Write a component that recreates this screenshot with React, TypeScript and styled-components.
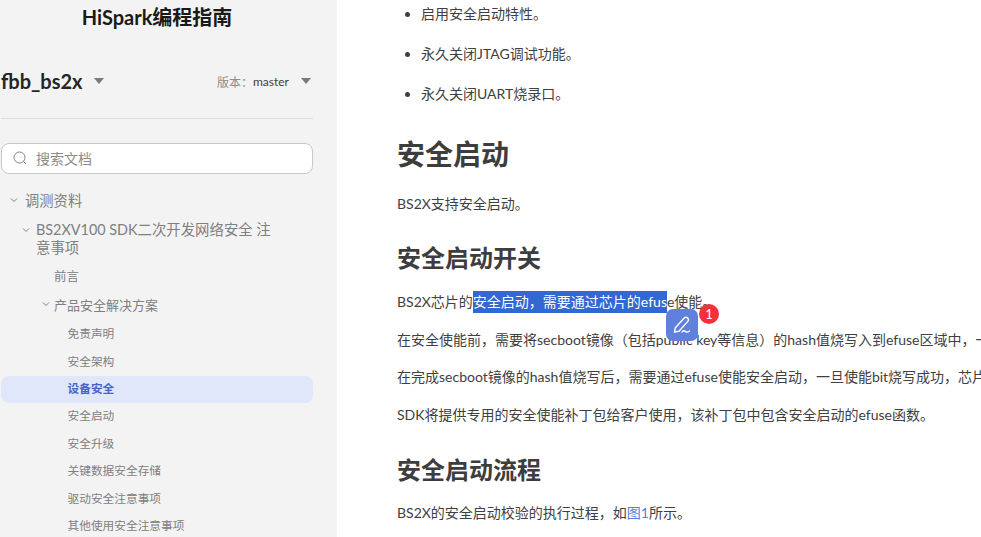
import styled, { createGlobalStyle } from "styled-components";

const Global = createGlobalStyle`
    html, body {
        margin: 0;
        padding: 0;
        width: 981px;
        height: 537px;
        overflow: hidden;
        background: #ffffff;
        font-family: Lato, "Noto Sans CJK SC", sans-serif;
    }
`

const Page = styled.div`
    display: flex;
    width: 981px;
    height: 537px;
    overflow: hidden;
`

const Sidebar = styled.aside`
    width: 337px;
    height: 537px;
    flex-shrink: 0;
    background: #f3f3f3;
    padding-left: 1px;
    box-sizing: border-box;
    overflow: hidden;
`

const SideInner = styled.div`
    width: 312px;
`

const Title = styled.div`
    height: 35px;
    line-height: 35px;
    text-align: center;
    font-size: 20px;
    font-weight: 700;
    color: #1a1a1a;
`

const VersionRow = styled.div`
    display: flex;
    align-items: center;
    justify-content: space-between;
    height: 84px;
    padding-top: 8px;
    box-sizing: border-box;
    border-bottom: 1px solid #dfdfdf;
    margin-bottom: 24px;
`

const ProjectName = styled.div`
    display: flex;
    align-items: center;
    font-size: 20px;
    font-weight: 700;
    color: #262626;
`

const Caret = styled.span<{ $ml: number }>`
    width: 0;
    height: 0;
    margin-left: ${(p) => p.$ml}px;
    border-left: 5.5px solid transparent;
    border-right: 5.5px solid transparent;
    border-top: 6px solid #7a7a7a;
`

const Version = styled.div`
    display: flex;
    align-items: center;
    font-size: 12px;
    color: #8c8c8c;
    margin-right: 2px;
    padding-top: 1px;
`

const VersionValue = styled.span`
    color: #404040;
`

const SearchBox = styled.div`
    display: flex;
    align-items: center;
    gap: 8px;
    height: 31px;
    box-sizing: border-box;
    padding: 0 0 1px 10px;
    background: #ffffff;
    border: 1px solid #c8c8c8;
    border-radius: 8px;
    font-size: 14px;
    color: #8c8c8c;
    margin-bottom: 11px;
`

const Tree = styled.div`
    display: flex;
    flex-direction: column;
`

const Row = styled.div<{ $indent: number; $size: number; $h: number; $pb?: number; $active?: boolean }>`
    display: flex;
    align-items: center;
    height: ${(p) => p.$h}px;
    box-sizing: border-box;
    padding-left: ${(p) => p.$indent}px;
    padding-bottom: ${(p) => p.$pb ?? 0}px;
    font-size: ${(p) => p.$size}px;
    font-weight: ${(p) => (p.$active ? 700 : 400)};
    color: ${(p) => (p.$active ? "#4a63c9" : "#808080")};
    background: ${(p) => (p.$active ? "#e1e7fb" : "transparent")};
    border-radius: 8px;
    flex-shrink: 0;
`

const Wrapped = styled.div`
    display: flex;
    align-items: flex-start;
    padding-left: 20px;
    height: 47px;
    padding-top: 7px;
    box-sizing: border-box;
    font-size: 14.4px;
    line-height: 18px;
    color: #808080;
`

const Chevron = styled.svg<{ $mr: number }>`
    width: 10px;
    height: 10px;
    margin-right: ${(p) => p.$mr}px;
    flex-shrink: 0;
`

const WrappedChevron = styled(Chevron)`
    margin-top: 4px;
`

const WrappedText = styled.div`
    width: 240px;
`

const Main = styled.main`
    position: relative;
    flex: 1;
    min-width: 0;
    height: 537px;
    overflow: hidden;
    padding-left: 60px;
    box-sizing: border-box;
    color: #404040;
    font-size: 14px;
`

const List = styled.ul`
    margin: 0;
    padding: 4px 0 0 24px;
    list-style: disc;
`

const ListItem = styled.li`
    height: 20px;
    line-height: 20px;
    margin-bottom: 20px;
`

const H2 = styled.h2`
    margin: 30px 0 0;
    height: 40px;
    line-height: 40px;
    font-size: 28px;
    font-weight: 700;
    color: #3d3d3d;
`

const H3 = styled.h3<{ $top: number }>`
    margin: ${(p) => p.$top}px 0 0;
    height: 34px;
    line-height: 34px;
    font-size: 24px;
    font-weight: 700;
    color: #3d3d3d;
`

const Para = styled.p<{ $top: number }>`
    margin: ${(p) => p.$top}px 0 0;
    height: 20px;
    line-height: 20px;
    white-space: nowrap;
`

const Selected = styled.span`
    background: #3367d1;
    color: #ffffff;
    display: inline-block;
    height: 22px;
    line-height: 21px;
`

const FigLink = styled.span`
    color: #5c7be0;
`

const NoteButton = styled.div`
    position: absolute;
    left: 329px;
    top: 309px;
    width: 32px;
    height: 32px;
    border-radius: 7px;
    background: #5f80dd;
    display: flex;
    align-items: center;
    justify-content: center;
`

const Badge = styled.div`
    position: absolute;
    left: 362px;
    top: 304px;
    width: 20px;
    height: 20px;
    border-radius: 50%;
    background: #f5303d;
    color: #ffffff;
    font-size: 13px;
    font-weight: 400;
    display: flex;
    align-items: center;
    justify-content: center;
`

const Down = ({ mr }: { mr: number }) => (
    <Chevron $mr={mr} viewBox="0 0 10 10" fill="none" stroke="#808080" strokeWidth="1">
        <path d="M2 3.5 L5 6.5 L8 3.5" />
    </Chevron>
)

const Item = ({ children, active }: { children: string; active?: boolean }) => (
    <Row $indent={66.5} $size={11.7} $h={27.4} $pb={4} $active={active}>{children}</Row>
)

export default function App() {
    return (
        <Page>
            <Global />
            <Sidebar>
                <SideInner>
                    <Title>HiSpark编程指南</Title>
                    <VersionRow>
                        <ProjectName>fbb_bs2x<Caret $ml={11} /></ProjectName>
                        <Version>
                            版本：<VersionValue>master</VersionValue><Caret $ml={12} />
                        </Version>
                    </VersionRow>
                    <SearchBox>
                        <svg width="16" height="16" viewBox="0 0 16 16" fill="none" stroke="#808080" strokeWidth="1">
                            <circle cx="7.5" cy="7.5" r="5.5" />
                            <path d="M11.5 11.5 L14 14" />
                        </svg>
                        搜索文档
                    </SearchBox>
                    <Tree>
                        <Row $indent={8} $size={14.3} $h={29}><Down mr={6} />调测资料</Row>
                        <Wrapped>
                            <WrappedChevron $mr={5} viewBox="0 0 10 10" fill="none" stroke="#808080" strokeWidth="1">
                                <path d="M2 3.5 L5 6.5 L8 3.5" />
                            </WrappedChevron>
                            <WrappedText>BS2XV100 SDK二次开发网络安全 注意事项</WrappedText>
                        </Wrapped>
                        <Row $indent={53} $size={12.5} $h={28}>前言</Row>
                        <Row $indent={40} $size={13} $h={32} $pb={2}><Down mr={3} />产品安全解决方案</Row>
                        <Item>免责声明</Item>
                        <Item>安全架构</Item>
                        <Item active>设备安全</Item>
                        <Item>安全启动</Item>
                        <Item>安全升级</Item>
                        <Item>关键数据安全存储</Item>
                        <Item>驱动安全注意事项</Item>
                        <Item>其他使用安全注意事项</Item>
                    </Tree>
                </SideInner>
            </Sidebar>
            <Main>
                <List>
                    <ListItem>启用安全启动特性。</ListItem>
                    <ListItem>永久关闭JTAG调试功能。</ListItem>
                    <ListItem>永久关闭UART烧录口。</ListItem>
                </List>
                <H2>安全启动</H2>
                <Para $top={20}>BS2X支持安全启动。</Para>
                <H3 $top={27}>安全启动开关</H3>
                <Para $top={16}>BS2X芯片的<Selected>安全启动，需要通过芯片的efus</Selected>e使能。</Para>
                <Para $top={18.7}>在安全使能前，需要将secboot镜像（包括public key等信息）的hash值烧写入到efuse区域中，一旦烧写成功后将无法修改。</Para>
                <Para $top={17.7}>在完成secboot镜像的hash值烧写后，需要通过efuse使能安全启动，一旦使能bit烧写成功，芯片将开启安全启动。</Para>
                <Para $top={17.7}>SDK将提供专用的安全使能补丁包给客户使用，该补丁包中包含安全启动的efuse函数。</Para>
                <H3 $top={28}>安全启动流程</H3>
                <Para $top={16}>BS2X的安全启动校验的执行过程，如<FigLink>图1</FigLink>所示。</Para>
                <NoteButton>
                    <svg width="22" height="22" viewBox="0 0 22 22" fill="none" stroke="#ffffff" strokeWidth="1.4" strokeLinecap="round" strokeLinejoin="round">
                        <path d="M3.5 18 L4.2 14 L13 4.2 C14 3.1 15.5 3 16.6 4 C17.7 5 17.7 6.4 16.8 7.4 L8 17.2 Z" />
                        <path d="M11 18 C12.5 16.5 13.5 16.5 14.5 17.5 C15.5 18.5 17 18.2 18.5 17" />
                    </svg>
                </NoteButton>
                <Badge>1</Badge>
            </Main>
        </Page>
    )
}
